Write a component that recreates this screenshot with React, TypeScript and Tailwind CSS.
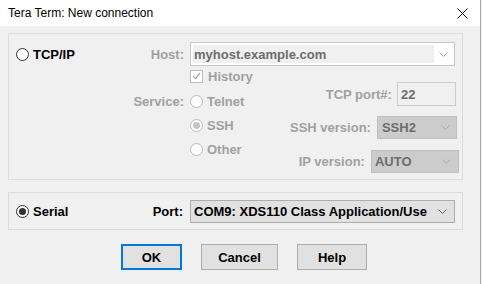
import React from 'react';

// small widgets drawn like the classic Win32 controls
function Radio({ checked = false, disabled = false }: { checked?: boolean; disabled?: boolean }) {
    return (
        <span
            className={`flex h-[13px] w-[13px] shrink-0 items-center justify-center rounded-full border bg-white ${disabled ? "border-[#bcbcbc]" : "border-[#333333]"}`}
        >
            {checked && (
                <span className={`block h-[7px] w-[7px] rounded-full ${disabled ? "bg-[#c4c4c4]" : "bg-[#333333]"}`} />
            )}
        </span>
    );
}

function Chevron({ color = "#a8a8a8" }: { color?: string }) {
    return (
        <svg width="9" height="5" viewBox="0 0 9 5" className="shrink-0">
            <path d="M0.5 0.5 L4.5 4.5 L8.5 0.5" fill="none" stroke={color} strokeWidth="1" />
        </svg>
    );
}

function App() {
    const dim = "whitespace-nowrap text-[#a0a0a0]";

    return (
        <div className="h-[284px] w-[482px] overflow-hidden bg-[#f0f0f0] font-['Liberation_Sans',Arial,sans-serif] text-[13px] font-bold leading-[15px] text-black">
            <div className="flex h-[284px] w-[481px] flex-col border-r border-[#a8a8a8] bg-[#f0f0f0]">

                {/* title bar */}
                <div className="flex h-[26px] shrink-0 items-center justify-between bg-white pl-[8px] pr-[12px]">
                    <span className="text-[12px] font-normal leading-none">
                        Tera Term: New connection
                    </span>
                    <svg width="11" height="11" viewBox="0 0 11 11">
                        <path d="M0.5 0.5 L10.5 10.5 M10.5 0.5 L0.5 10.5" stroke="#111" strokeWidth="1" />
                    </svg>
                </div>

                {/* TCP/IP group */}
                <div className="ml-[8px] mt-[7px] flex h-[147px] w-[455px] shrink-0 flex-col border border-[#dcdcdc] pt-[8px]">
                    <div className="flex h-[24px] items-center">
                        <div className="flex w-[133px] shrink-0 items-center gap-[4px] pl-[7px]">
                            <Radio />
                            <span>TCP/IP</span>
                        </div>
                        <span className={`w-[42px] shrink-0 text-right ${dim}`}>Host:</span>
                        <div className="ml-[6px] flex h-[24px] w-[265px] shrink-0 items-center border border-[#c8c8c8] bg-white p-[2px]">
                            <div className="flex h-full flex-1 items-center bg-[#f0f0f0] pl-[1px] text-[#6d6d6d]">
                                myhost.example.com
                            </div>
                            <div className="flex w-[18px] justify-center">
                                <Chevron />
                            </div>
                        </div>
                    </div>

                    <div className="flex">
                        {/* service label */}
                        <div className="w-[175px] shrink-0 pt-[28px] text-right">
                            <span className={dim}>Service:</span>
                        </div>

                        {/* checkbox + radios */}
                        <div className="ml-[6px] flex w-[100px] shrink-0 flex-col">
                            <div className="flex h-[20px] items-center gap-[5px]">
                                <span className="flex h-[13px] w-[13px] items-center justify-center border border-[#bcbcbc] bg-white">
                                    <svg width="9" height="8" viewBox="0 0 9 8">
                                        <path d="M1 4 L3.5 6.5 L8 1" fill="none" stroke="#a8a8a8" strokeWidth="1.2" />
                                    </svg>
                                </span>
                                <span className={dim}>History</span>
                            </div>
                            <div className="mt-[3px] flex h-[24px] items-center gap-[4px]">
                                <Radio disabled />
                                <span className={dim}>Telnet</span>
                            </div>
                            <div className="flex h-[24px] items-center gap-[4px]">
                                <Radio disabled checked />
                                <span className={dim}>SSH</span>
                            </div>
                            <div className="flex h-[24px] items-center gap-[4px]">
                                <Radio disabled />
                                <span className={dim}>Other</span>
                            </div>
                        </div>

                        {/* port / versions */}
                        <div className="flex flex-1 flex-col items-end pr-[7px] pt-[16px]">
                            <div className="flex items-center gap-[5px]">
                                <span className={dim}>TCP port#:</span>
                                <div className="flex h-[24px] w-[59px] shrink-0 items-center border border-[#cccccc] bg-[#f0f0f0] pl-[3px] text-[#6d6d6d]">
                                    22
                                </div>
                            </div>
                            <div className="mr-[-1px] mt-[10px] flex items-center gap-[6px]">
                                <span className={dim}>SSH version:</span>
                                <div className="flex h-[23px] w-[80px] shrink-0 items-center justify-between border border-[#bfbfbf] bg-[#cccccc] pl-[4px] pr-[6px] text-[#6d6d6d]">
                                    <span>SSH2</span>
                                    <Chevron />
                                </div>
                            </div>
                            <div className="mr-[-3px] mt-[11px] flex items-center gap-[6px]">
                                <span className={dim}>IP version:</span>
                                <div className="flex h-[23px] w-[88px] shrink-0 items-center justify-between border border-[#bfbfbf] bg-[#cccccc] pl-[3px] pr-[7px] text-[#6d6d6d]">
                                    <span>AUTO</span>
                                    <Chevron />
                                </div>
                            </div>
                        </div>
                    </div>
                </div>

                {/* Serial group */}
                <div className="ml-[8px] mt-[12px] flex h-[38px] w-[455px] shrink-0 items-center border border-[#dcdcdc]">
                    <div className="flex w-[133px] shrink-0 items-center gap-[4px] pl-[7px]">
                        <Radio checked />
                        <span>Serial</span>
                    </div>
                    <span className="w-[41px] shrink-0 text-right">Port:</span>
                    <div className="ml-[7px] flex h-[23px] w-[265px] shrink-0 items-center justify-between border border-[#adadad] bg-[#e1e1e1] pl-[3px] pr-[7px]">
                        <span className="w-[240px] overflow-hidden whitespace-nowrap">COM9: XDS110 Class Application/Use</span>
                        <Chevron color="#606060" />
                    </div>
                </div>

                {/* buttons */}
                <div className="ml-[121px] mt-[14px] flex gap-[19px]">
                    <button className="h-[26px] w-[61px] border-2 border-[#0078d7] bg-[#e1e1e1] font-bold">OK</button>
                    <button className="h-[26px] w-[77px] border border-[#adadad] bg-[#e1e1e1] font-bold">Cancel</button>
                    <button className="h-[26px] w-[70px] border border-[#adadad] bg-[#e1e1e1] font-bold">Help</button>
                </div>
            </div>
        </div>
    );
}

export default App;
